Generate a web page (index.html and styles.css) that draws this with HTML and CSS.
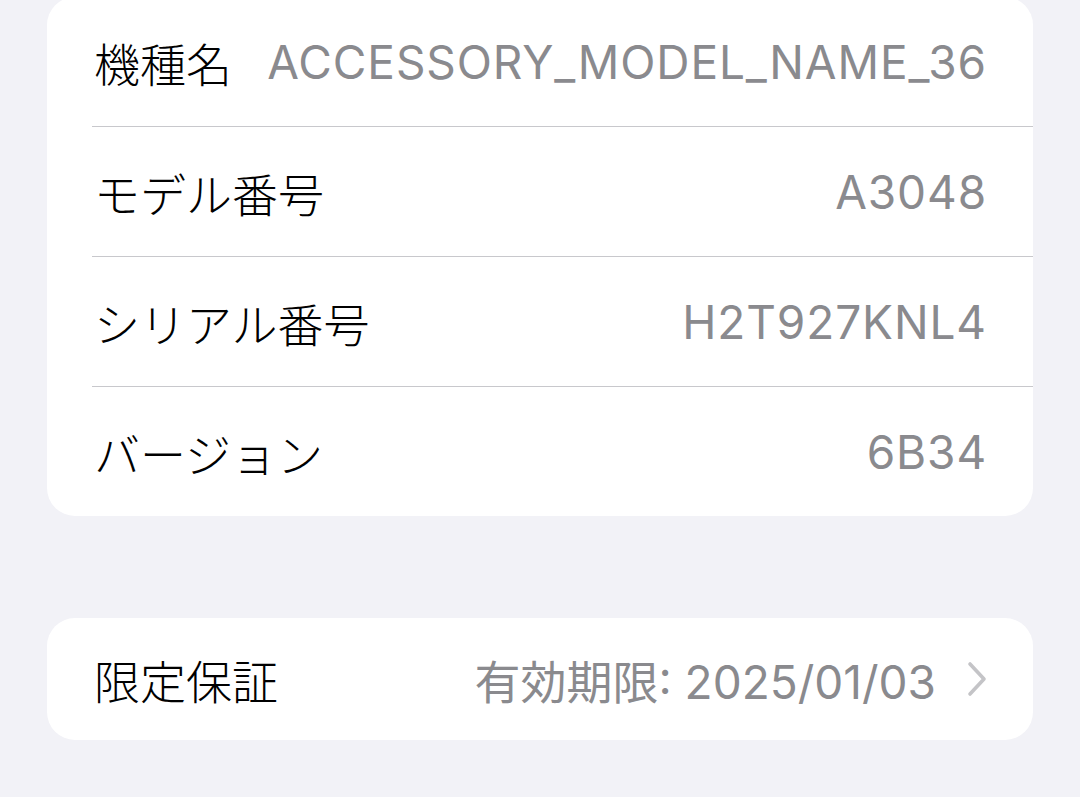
FILE: index.html
```html
<!DOCTYPE html>
<html lang="ja">
<head>
    <meta charset="UTF-8">
    <meta name="viewport" content="width=device-width, initial-scale=1.0">
    <title>情報</title>
    <link rel="stylesheet" href="styles.css">
</head>
<body>
    <div class="wrap">
        <div class="group first">
            <div class="row">
                <span class="label">機種名</span>
                <span class="value">ACCESSORY_MODEL_NAME_36</span>
            </div>
            <div class="row">
                <span class="label">モデル番号</span>
                <span class="value">A3048</span>
            </div>
            <div class="row">
                <span class="label">シリアル番号</span>
                <span class="value">H2T927KNL4</span>
            </div>
            <div class="row">
                <span class="label">バージョン</span>
                <span class="value">6B34</span>
            </div>
        </div>

        <div class="group">
            <div class="row link">
                <span class="label">限定保証</span>
                <span class="value">有効期限: 2025/01/03</span>
                <svg class="chevron" width="20" height="36" viewBox="0 0 20 36">
                    <path d="M3 3 L17 18 L3 33" fill="none" stroke="#c4c4c7" stroke-width="3.6" stroke-linecap="round" stroke-linejoin="round"/>
                </svg>
            </div>
        </div>
    </div>
</body>
</html>
```

FILE: styles.css
```css
*{ margin: 0; padding: 0; box-sizing: border-box; }
body{ background: #f2f2f7; font-family: "Inter", "Noto Sans CJK JP", sans-serif; overflow: hidden; }
.wrap{ padding: 0 47px; }
.group{ background: #fff; border-radius: 28px; padding-left: 45px; margin-bottom: 102px; }
.group:last-child{ margin-bottom: 0; }
.group.first{ margin-top: -3px; }
.row{ height: 130px; display: flex; align-items: center; padding-right: 46px; border-bottom: 1px solid #c8c8cc; }
.row:last-child{ border-bottom: none; height: 129px; }
.label{ font-size: 46px; font-weight: 300; color: #000; padding-left: 2px; white-space: nowrap; }
.value{ margin-left: auto; font-size: 46px; color: #8a8a8e; white-space: nowrap; letter-spacing: 0.9px; }
.link .value{ letter-spacing: 0; }
.group .link:last-child{ height: 122px; padding-right: 47px; }
.chevron{ margin-left: 31px; margin-right: -1px; flex-shrink: 0; }
```
